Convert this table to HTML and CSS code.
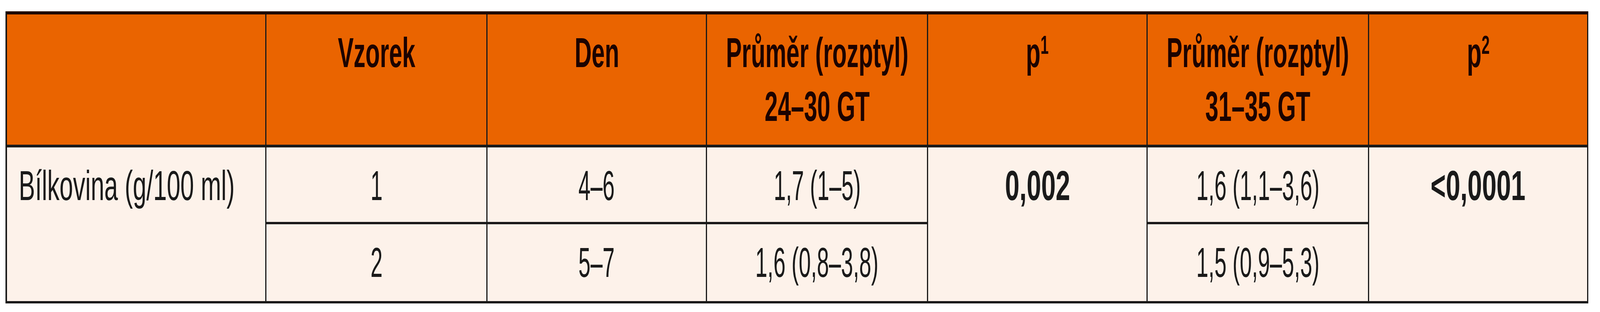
FILE: index.html
```html
<!DOCTYPE html>
<html lang="cs">
<head>
<meta charset="utf-8">
<title>Bílkovina</title>
<link rel="stylesheet" href="styles.css">
</head>
<body>
<div class="tbl">
  <div class="c h"></div>
  <div class="c h"><span class="t tb">Vzorek</span></div>
  <div class="c h"><span class="t tb">Den</span></div>
  <div class="c h"><span class="t tb">Průměr (rozptyl)<br>24–30 GT</span></div>
  <div class="c h"><span class="t tp">p<sup>1</sup></span></div>
  <div class="c h"><span class="t tb">Průměr (rozptyl)<br>31–35 GT</span></div>
  <div class="c h last"><span class="t tp">p<sup>2</sup></span></div>

  <div class="c b label span2"><span class="t tl">Bílkovina (g/100 ml)</span></div>
  <div class="c b"><span class="t tn">1</span></div>
  <div class="c b"><span class="t tn">4–6</span></div>
  <div class="c b"><span class="t tn">1,7 (1–5)</span></div>
  <div class="c b pval span2"><span class="t tv">0,002</span></div>
  <div class="c b"><span class="t tn">1,6 (1,1–3,6)</span></div>
  <div class="c b pval span2 last"><span class="t tv">&lt;0,0001</span></div>

  <div class="c b"><span class="t tn">2</span></div>
  <div class="c b"><span class="t tn">5–7</span></div>
  <div class="c b"><span class="t tn">1,6 (0,8–3,8)</span></div>
  <div class="c b"><span class="t tn">1,5 (0,9–5,3)</span></div>
</div>
<script src="script.js"></script>
</body>
</html>
```
FILE: styles.css
```css
:root {
  /* one pixel of the 6364 x 800 reference, per axis */
  --ux: calc(100vw / 6364);
  --uy: calc(100vh / 800);
  /* horizontal text squeeze = ux / uy (set from the viewport by script.js) */
  --sx: 0.6436;
}

html, body {
  margin: 0;
  padding: 0;
  background: #ffffff;
  overflow: hidden;
}

body {
  font-family: "Liberation Sans", Arial, sans-serif;
  font-size: calc(108 * var(--uy));
  line-height: calc(138 * var(--uy));
}

.tbl {
  display: grid;
  width: max-content;
  margin: calc(29 * var(--uy)) 0 0 calc(22 * var(--ux));
  grid-template-columns:
    calc(1032 * var(--ux)) calc(879 * var(--ux)) calc(873 * var(--ux))
    calc(880 * var(--ux)) calc(873 * var(--ux)) calc(880 * var(--ux))
    calc(873 * var(--ux));
  grid-template-rows: calc(341 * var(--uy)) calc(197 * var(--uy)) calc(203 * var(--uy));
  border-top: calc(8 * var(--uy)) solid #1e0700;
  border-left: calc(7 * var(--ux)) solid #1a1a1a;
}

.c {
  box-sizing: border-box;
  display: flex;
  justify-content: center;
  align-items: flex-start;
  border-right: calc(5 * var(--ux)) solid #1a1a1a;
  border-bottom: calc(6 * var(--uy)) solid #1a1a1a;
  padding-top: calc(29 * var(--uy));
  white-space: nowrap;
  min-width: 0;
}

.c.last { border-right-width: calc(6 * var(--ux)); }

.h {
  background: #ea6400;
  color: #1c0200;
  font-weight: bold;
  border-bottom-width: calc(7 * var(--uy));
}

.b { background: #fdf2ea; color: #1a1a1a; }
.span2 { grid-row: span 2; }
.label { justify-content: flex-start; padding-left: calc(47 * var(--ux)); }
.pval { font-weight: bold; }

.t {
  display: block;
  flex: none;
  text-align: center;
  transform-origin: 50% 50%;
}

.tb { transform: scaleX(calc(0.87 * var(--sx))); }
.tp { transform: scaleX(calc(0.88 * var(--sx))); }
.tn { transform: scaleX(calc(0.8 * var(--sx))); }
.tv { transform: scaleX(calc(0.96 * var(--sx))); }
.tl { transform: scaleX(calc(0.9 * var(--sx))); transform-origin: 0 50%; text-align: left; }

.tp sup {
  font-size: calc(66 * var(--uy));
  line-height: 0;
  vertical-align: calc(34 * var(--uy));
}
```
FILE: script.js
```js
(function () {
  var sx = (window.innerWidth / 6364) / (window.innerHeight / 800);
  document.documentElement.style.setProperty('--sx', String(sx));
})();
```
